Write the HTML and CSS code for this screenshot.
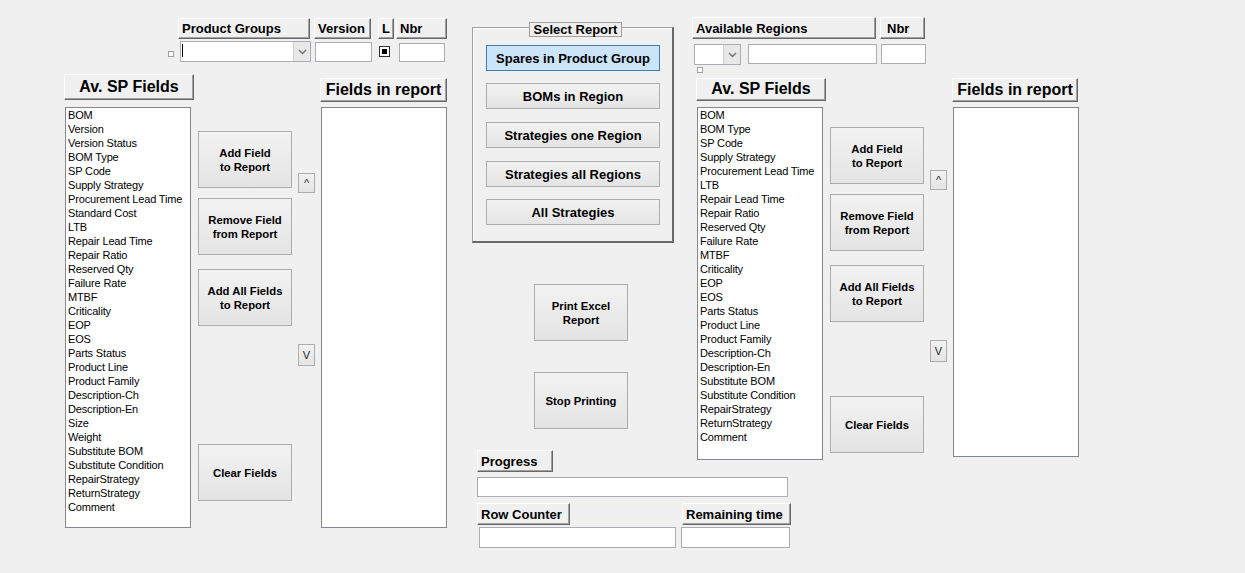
FILE: index.html
```html
<!DOCTYPE html>
<html>
<head>
<meta charset="utf-8">
<link rel="stylesheet" href="styles.css">
</head>
<body>
<div class="form">

  <!-- LEFT: Product group report fields -->
  <div class="left">
    <div class="row">
      <div class="lbl pg-l">Product Groups</div>
      <div class="lbl ver-l">Version</div>
      <div class="lbl l-l">L</div>
      <div class="lbl nbr-l">Nbr</div>
    </div>
    <div class="row in-row">
      <div class="sq pg-sq"></div>
      <div class="combo pg-combo"><span class="caret"></span><span class="drop"><svg width="9" height="6" viewBox="0 0 9 6"><path d="M1 1 L4.5 4.5 L8 1" fill="none" stroke="#707070" stroke-width="1.4"/></svg></span></div>
      <div class="tb ver-tb"></div>
      <div class="chk"><span></span></div>
      <div class="tb nbr-tb"></div>
    </div>
    <div class="row main-l">
      <div class="col ca">
        <div class="lbl big avl">Av. SP Fields</div>
        <div class="list list-l">
          <div>BOM</div><div>Version</div><div>Version Status</div><div>BOM Type</div><div>SP Code</div><div>Supply Strategy</div><div>Procurement Lead Time</div><div>Standard Cost</div><div>LTB</div><div>Repair Lead Time</div><div>Repair Ratio</div><div>Reserved Qty</div><div>Failure Rate</div><div>MTBF</div><div>Criticality</div><div>EOP</div><div>EOS</div><div>Parts Status</div><div>Product Line</div><div>Product Family</div><div>Description-Ch</div><div>Description-En</div><div>Size</div><div>Weight</div><div>Substitute BOM</div><div>Substitute Condition</div><div>RepairStrategy</div><div>ReturnStrategy</div><div>Comment</div>
        </div>
      </div>
      <div class="col cb">
        <div class="btn b1">Add Field<br>to Report</div>
        <div class="btn b2">Remove Field<br>from Report</div>
        <div class="btn b3">Add All Fields<br>to Report</div>
        <div class="btn b4">Clear Fields</div>
      </div>
      <div class="col cc">
        <div class="sbtn up-l">^</div>
        <div class="sbtn dn-l">V</div>
      </div>
      <div class="col cd">
        <div class="lbl big fir">Fields in report</div>
        <div class="list list-lr"></div>
      </div>
    </div>
  </div>

  <!-- MIDDLE: report selection and printing -->
  <div class="mid">
    <div class="frame">
      <div class="frame-title">Select Report</div>
      <div class="rbtn active r1">Spares in Product Group</div>
      <div class="rbtn r2">BOMs in Region</div>
      <div class="rbtn r3">Strategies one Region</div>
      <div class="rbtn r4">Strategies all Regions</div>
      <div class="rbtn r5">All Strategies</div>
    </div>
    <div class="btn pr1">Print Excel<br>Report</div>
    <div class="btn pr2">Stop Printing</div>
    <div class="lbl prog-l">Progress</div>
    <div class="tb prog-tb"></div>
    <div class="row">
      <div class="lbl rc-l">Row Counter</div>
      <div class="lbl rt-l">Remaining time</div>
    </div>
    <div class="row">
      <div class="tb rc-tb"></div>
      <div class="tb rt-tb"></div>
    </div>
  </div>

  <!-- RIGHT: region report fields -->
  <div class="right">
    <div class="row">
      <div class="lbl ar-l">Available Regions</div>
      <div class="lbl nbr2-l">Nbr</div>
    </div>
    <div class="row in-row2">
      <div class="combo ar-combo"><span class="drop"><svg width="9" height="6" viewBox="0 0 9 6"><path d="M1 1 L4.5 4.5 L8 1" fill="none" stroke="#707070" stroke-width="1.4"/></svg></span></div>
      <div class="tb ar-tb"></div>
      <div class="tb nbr2-tb"></div>
    </div>
    <div class="sq ar-sq"></div>
    <div class="row main-r">
      <div class="col ra">
        <div class="lbl big avr">Av. SP Fields</div>
        <div class="list list-r">
          <div>BOM</div><div>BOM Type</div><div>SP Code</div><div>Supply Strategy</div><div>Procurement Lead Time</div><div>LTB</div><div>Repair Lead Time</div><div>Repair Ratio</div><div>Reserved Qty</div><div>Failure Rate</div><div>MTBF</div><div>Criticality</div><div>EOP</div><div>EOS</div><div>Parts Status</div><div>Product Line</div><div>Product Family</div><div>Description-Ch</div><div>Description-En</div><div>Substitute BOM</div><div>Substitute Condition</div><div>RepairStrategy</div><div>ReturnStrategy</div><div>Comment</div>
        </div>
      </div>
      <div class="col rb">
        <div class="btn c1">Add Field<br>to Report</div>
        <div class="btn c2">Remove Field<br>from Report</div>
        <div class="btn c3">Add All Fields<br>to Report</div>
        <div class="btn c4">Clear Fields</div>
      </div>
      <div class="col rc">
        <div class="sbtn up-r">^</div>
        <div class="sbtn dn-r">V</div>
      </div>
      <div class="col rd">
        <div class="lbl big fir2">Fields in report</div>
        <div class="list list-rr"></div>
      </div>
    </div>
  </div>

</div>
</body>
</html>
```

FILE: styles.css
```css
* { box-sizing: border-box; }

body {
  margin: 0;
  background: #f0f0f0;
  font-family: "Liberation Sans", Arial, sans-serif;
  color: #000;
}

.form {
  display: flex;
  align-items: flex-start;
  width: 1245px;
  height: 573px;
  overflow: hidden;
}

.row { display: flex; align-items: flex-start; }
.col { display: flex; flex-direction: column; align-items: flex-start; flex-shrink: 0; }

/* raised access-style labels */
.lbl {
  display: flex;
  align-items: center;
  flex-shrink: 0;
  background: #f0f0f0;
  border: 1px solid;
  border-color: #ffffff #696969 #696969 #ffffff;
  box-shadow: inset -1px -1px 0 #a0a0a0;
  font-weight: bold;
  font-size: 13px;
  padding-left: 3px;
  white-space: nowrap;
}
.lbl.big { font-size: 16px; justify-content: center; padding: 0 0 1px 0; }

.tb { background: #fff; border: 1px solid #abadb3; flex-shrink: 0; }

.sq { width: 6px; height: 6px; border: 1px solid #a0a0a0; background: #fff; flex-shrink: 0; }

.combo {
  position: relative;
  display: flex;
  justify-content: flex-end;
  background: #fff;
  border: 1px solid #abadb3;
  flex-shrink: 0;
}
.combo .drop {
  width: 17px;
  height: 100%;
  background: #e8e8e8;
  border-left: 1px solid #d0d0d0;
  display: flex;
  align-items: center;
  justify-content: center;
}
.caret {
  position: absolute;
  left: 1px;
  top: 2px;
  width: 1px;
  height: 13px;
  background: #000;
}

.chk {
  width: 11px; height: 11px;
  border: 1px solid #333;
  background: #fff;
  display: flex; align-items: center; justify-content: center;
  flex-shrink: 0;
}
.chk span { width: 5px; height: 5px; background: #000; }

.list {
  background: #fff;
  border: 1px solid #828790;
  font-size: 11px;
  letter-spacing: -0.15px;
  line-height: 14px;
  padding: 0 2px;
  white-space: nowrap;
  overflow: hidden;
}

.btn {
  display: flex;
  align-items: center;
  justify-content: center;
  text-align: center;
  flex-shrink: 0;
  width: 94px;
  height: 57px;
  border: 1px solid #adadad;
  background: linear-gradient(#f2f2f2, #e4e4e4);
  font-weight: bold;
  font-size: 11.3px;
  line-height: 14px;
}

.sbtn {
  display: flex;
  align-items: center;
  justify-content: center;
  width: 17px;
  border: 1px solid #adadad;
  background: linear-gradient(#f2f2f2, #e4e4e4);
  font-size: 11px;
  color: #222;
}

/* ---------- LEFT ---------- */
.left { margin-left: 64px; width: 383px; padding-top: 18px; flex-shrink: 0; }
.pg-l { margin-left: 114px; width: 132px; height: 21px; }
.ver-l { margin-left: 4px; width: 57px; height: 21px; }
.l-l { margin-left: 7px; width: 16px; height: 21px; }
.nbr-l { margin-left: 2px; width: 51px; height: 21px; }

.in-row { margin-top: 2px; height: 21px; }
.pg-sq { margin-left: 104px; margin-top: 10px; }
.pg-combo { margin-left: 6px; width: 131px; height: 21px; }
.ver-tb { margin-left: 4px; width: 57px; height: 20px; margin-top: 1px; }
.chk { margin-left: 7px; margin-top: 5px; }
.nbr-tb { margin-left: 9px; width: 46px; height: 19px; margin-top: 2px; }

.main-l { margin-top: 12px; }
.avl { width: 130px; height: 26px; }
.list-l { margin-top: 7px; margin-left: 1px; width: 126px; height: 421px; }
.cb { margin-left: 4px; }
.b1 { margin-top: 57px; }
.b2 { margin-top: 10px; }
.b3 { margin-top: 14px; }
.b4 { margin-top: 118px; }
.cc { margin-left: 6px; }
.up-l { margin-top: 99px; height: 20px; }
.dn-l { margin-top: 151px; height: 22px; }
.cd { margin-left: 5px; }
.fir { margin-top: 4px; width: 127px; height: 24px; }
.list-lr { margin-top: 5px; margin-left: 1px; width: 126px; height: 421px; }

/* ---------- MIDDLE ---------- */
.mid { margin-left: 25px; width: 220px; flex-shrink: 0; display: flex; flex-direction: column; align-items: flex-start; }
.frame {
  margin-top: 27px;
  width: 202px;
  height: 216px;
  border: 1px solid #a0a0a0;
  border-right: 2px solid #696969;
  border-bottom: 2px solid #696969;
  box-shadow: inset 1px 1px 0 #fff;
  display: flex;
  flex-direction: column;
  align-items: flex-start;
}
.frame-title {
  margin-top: -6px;
  margin-left: 56px;
  width: 93px;
  height: 15px;
  border: 1px solid #a0a0a0;
  background: #f0f0f0;
  font-weight: bold;
  font-size: 13px;
  line-height: 13px;
  text-align: center;
  white-space: nowrap;
}
.rbtn {
  margin-left: 13px;
  width: 174px;
  height: 26px;
  display: flex;
  align-items: center;
  justify-content: center;
  border: 1px solid #adadad;
  background: linear-gradient(#f2f2f2, #e4e4e4);
  font-weight: bold;
  font-size: 13px;
  white-space: nowrap;
}
.rbtn.active { background: #cce4f7; border-color: #3c7fb1; }
.r1 { margin-top: 8px; }
.r2 { margin-top: 12px; }
.r3 { margin-top: 13px; }
.r4 { margin-top: 13px; }
.r5 { margin-top: 12px; }

.pr1 { margin-left: 62px; margin-top: 41px; }
.pr2 { margin-left: 62px; margin-top: 31px; }
.prog-l { margin-left: 5px; margin-top: 21px; width: 76px; height: 22px; }
.prog-tb { margin-left: 5px; margin-top: 5px; width: 311px; height: 20px; }
.rc-l { margin-left: 5px; margin-top: 6px; width: 93px; height: 22px; }
.rt-l { margin-left: 112px; margin-top: 6px; width: 109px; height: 22px; }
.rc-tb { margin-left: 7px; margin-top: 2px; width: 197px; height: 21px; }
.rt-tb { margin-left: 5px; margin-top: 2px; width: 109px; height: 21px; }

/* ---------- RIGHT ---------- */
.right { width: 400px; padding-top: 17px; flex-shrink: 0; display: flex; flex-direction: column; align-items: flex-start; }
.ar-l { width: 184px; height: 22px; }
.nbr2-l { margin-left: 4px; width: 45px; height: 22px; padding-left: 6px; }
.in-row2 { margin-top: 5px; }
.ar-combo { margin-left: 2px; width: 47px; height: 21px; }
.ar-tb { margin-left: 7px; width: 129px; height: 20px; }
.nbr2-tb { margin-left: 4px; width: 45px; height: 20px; }
.ar-sq { margin-left: 5px; margin-top: 2px; }
.main-r { margin-top: 5px; }
.avr { margin-left: 4px; width: 130px; height: 23px; }
.list-r { margin-top: 6px; margin-left: 5px; width: 126px; height: 353px; }
.rb { margin-left: 4px; }
.c1 { margin-top: 49px; }
.c2 { margin-top: 10px; }
.c3 { margin-top: 14px; }
.c4 { margin-top: 74px; }
.rc { margin-left: 6px; }
.up-r { margin-top: 92px; height: 20px; }
.dn-r { margin-top: 150px; height: 22px; }
.rd { margin-left: 5px; }
.fir2 { width: 126px; height: 24px; }
.list-rr { margin-top: 5px; margin-left: 1px; width: 126px; height: 350px; }
```
